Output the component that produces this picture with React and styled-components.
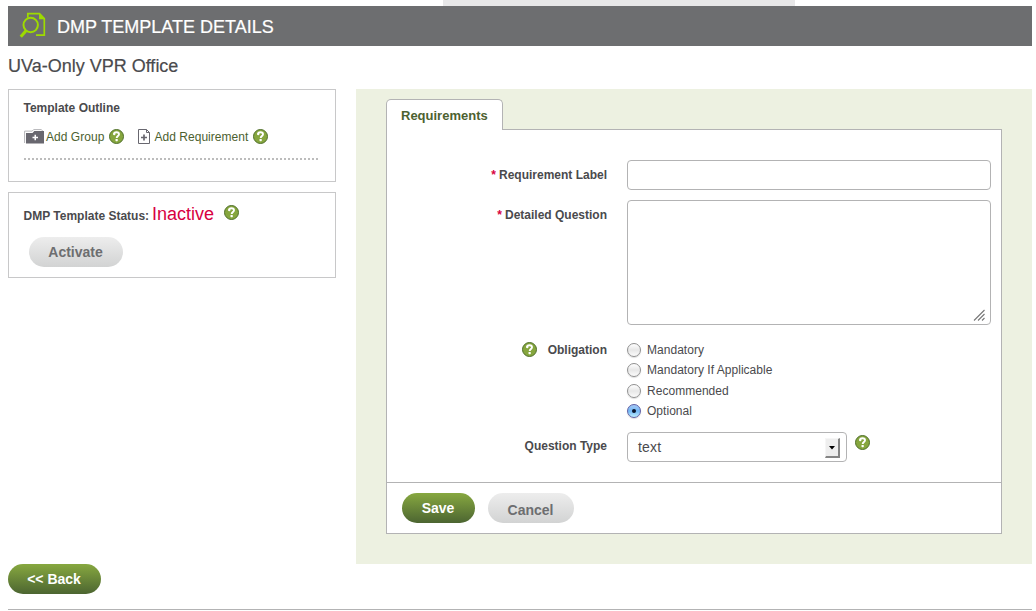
import React from "react";
import styled, { createGlobalStyle } from "styled-components";

const Global = createGlobalStyle`
  * { box-sizing: border-box; }
  body { margin: 0; background: #fff; color: #4a4a4d; font: 12px/16px "Liberation Sans", Arial, sans-serif; overflow: hidden; }
  svg { display: block; flex: none; }
`;
const Page = styled.div`width: 1036px; height: 611px; padding: 0 4px 0 8px; overflow: hidden;`;
const TopStrip = styled.div`width: 352px; height: 6px; margin-left: 435px; background: #e7e7e8;`;
const Header = styled.header`
  display: flex; align-items: center; height: 40px; padding-left: 11px; gap: 9px;
  background: #6d6e70; color: #fff;
`;
const Title = styled.h1`margin: 0; font-size: 18px; line-height: 20px; font-weight: 400; padding-top: 1px; white-space: nowrap; -webkit-text-stroke: 0.2px;`;
const Subtitle = styled(Title)`height: 43px; padding-top: 10px; color: #4a4a4d;`;
const Columns = styled.div`display: flex; gap: 20px; height: 475px;`;
const Sidebar = styled.aside`width: 328px; display: flex; flex-direction: column; gap: 10px;`;
const Card = styled.section`height: ${p => p.$h}px; border: 1px solid #c8c8c9; padding: 10px 14px 0;`;
const Strong = styled.strong`display: block; white-space: nowrap; padding-left: 0.5px;`;
const Actions = styled.div`display: flex; align-items: center; height: 42px; padding-bottom: 1px; margin-left: 1px;`;
const ActionLink = styled.a`
  position: relative; top: 0.5px; color: #4c6130; margin: 0 5px 0 ${p => p.$left}px;
  white-space: nowrap; letter-spacing: 0.04px;
`;
const Gap = styled.span`width: 14px;`;
const Dots = styled.div`
  height: 2px; width: 295px; margin: 0 0 0 1px;
  background: repeating-linear-gradient(90deg, #bcbcbc 0 2px, transparent 2px 4px);
`;
const StatusRow = styled.div`display: flex; align-items: baseline; height: 24px;`;
const Inactive = styled.span`font-size: 18px; line-height: 22px; color: #d8003f; margin: 0 10px 0 3px;`;
const StatusHelp = styled.span`align-self: flex-start; padding-top: 2px;`;
const Button = styled.button`
  display: block; width: ${p => p.$w}px; height: 30px; padding: ${p => p.$drop || 0}px 1px 0 0; border: 0; border-radius: 15px;
  font: bold 14px/20px "Liberation Sans", Arial, sans-serif;
  color: ${p => (p.$green ? "#fff" : "#6d6e70")};
  background: ${p => (p.$green ? "linear-gradient(#87a840, #4c6531)" : "linear-gradient(#ededed, #d2d3d3)")};
`;
const ActivateWrap = styled.div`padding: 10px 0 0 6px;`;
const Main = styled.main`flex: 1; background: #edf1e1; padding: 10px 30px 30px;`;
const Tab = styled.div`
  position: relative; z-index: 1; width: 117px; height: 31px; margin-bottom: -1px; padding: 8px 0 0 14px;
  border: 1px solid #b3b3b4; border-bottom: 0; border-radius: 5px 5px 0 0; background: #fff;
  font-size: 13px; font-weight: bold; color: #4c6130;
`;
const Panel = styled.div`width: 616px; height: 405px; border: 1px solid #b3b3b4; background: #fff;`;
const Fields = styled.div`height: 353px; padding-top: 30px; border-bottom: 1px solid #b3b3b4;`;
const Row = styled.div`display: flex; height: ${p => p.$h}px;`;
const Label = styled.label`
  display: flex; justify-content: flex-end; width: 220px; margin-right: 20px; padding-top: ${p => p.$top}px;
  font-weight: bold; white-space: nowrap;
`;
const Req = styled.span`color: #d8003f; margin-right: 3px;`;
const Box = styled.div`
  display: flex; width: ${p => p.$w}px; height: ${p => p.$h}px; border: 1px solid #b3b3b4; border-radius: 4px; background: #fff;
`;
const Grip = styled.span`margin: auto 5px 3px auto;`;
const Options = styled.div`display: flex; flex-direction: column; margin-top: -1px;`;
const Option = styled.label`display: flex; align-items: center; gap: 6px; height: ${p => p.$h}px; letter-spacing: 0.03px;`;
const Radio = styled.span`
  display: flex; align-items: center; justify-content: center; width: 14px; height: 14px; border-radius: 50%;
  border: 1px solid ${p => (p.$on ? "#5d60a5" : "#909090")};
  background: ${p => (p.$on ? "linear-gradient(#a6c9f5, #72b7f5 50%, #bdf0ff)" : "linear-gradient(#fff, #e7e7e7 50%, #fbfbfb)")};
  box-shadow: 0 1px 1px #0002;
  &::after { content: ""; width: 4px; height: 4px; border-radius: 50%; background: ${p => (p.$on ? "#08152b" : "transparent")}; }
`;
const SelectText = styled.span`font-size: 14px; line-height: 28px; padding-left: 10px; flex: 1; letter-spacing: 0.2px;`;
const Arrow = styled.span`
  display: flex; align-items: center; justify-content: center; width: 15px; height: 20px; margin: 5px 6px 0 0;
  background: #eee; border: solid; border-width: 1px 2px 2px 1px; border-color: #f6f6f6 #858585 #858585 #f6f6f6;
`;
const SelectHelp = styled.span`padding: 3px 0 0 8px;`;
const LabelHelp = styled.span`margin: 0 11px 0 0;`;
const Footer = styled.div`display: flex; gap: 13px; padding: 10px 0 0 15px;`;
const Rule = styled.div`height: 1px; margin-top: 15px; background: #b3b3b4;`;

const Help = () => (
  <svg width="15" height="15" viewBox="0 0 15 15">
    <circle cx="7.5" cy="7.5" r="7" fill="#86a63e" stroke="#51702c" />
    <path d="M5 5.500C5 4 6 3.200 7.500 3.200c1.600 0 2.500.8 2.500 2 0 1.700-2.300 1.800-2.300 3.800" fill="none" stroke="#fff" strokeWidth="1.900" />
    <circle cx="5.300" cy="5.200" r="1.100" fill="#fff" />
    <rect x="6.500" y="10" width="2.300" height="2.200" rx=".6" fill="#fff" />
  </svg>
);
const SearchDoc = () => (
  <svg width="29" height="28" viewBox="0 0 29 28" fill="none" stroke="#9edb00">
    <path d="M8.800 5.500V1.700H20.500l4.800 4.800v16.600H17" strokeWidth="1.700" />
    <path d="M20 1.500v5.800h5.800z" fill="#9edb00" stroke="none" />
    <circle cx="11.700" cy="13" r="7.200" strokeWidth="2" />
    <path d="M7 18.700L1.800 24.800" strokeWidth="3" />
  </svg>
);
const Folder = () => (
  <svg width="20" height="15" viewBox="0 0 20 15">
    <path d="M.6 14V2.100h7.600L9.600.6h7.800l1.300 1.500" fill="none" stroke="#b4b4b8" />
    <path d="M2 14.500V4h6.500L10.300 2H20v12.500z" fill="#68676f" />
    <path d="M8.500 8.500h5.500M11.250 5.800v5.400" stroke="#fff" strokeWidth="1.500" />
  </svg>
);
const DocPlus = () => (
  <svg width="12" height="15" viewBox="0 0 12 15" fill="none" stroke="#68676f">
    <path d="M.5.500h8l3 3v11H.5z" />
    <path d="M8.500.5v3h3" />
    <path d="M3 8.500h6M6 5.500v6" strokeWidth="1.700" />
  </svg>
);

export default function App() {
  return (
    <Page>
      <Global />
      <TopStrip />
      <Header><SearchDoc /><Title>DMP TEMPLATE DETAILS</Title></Header>
      <Subtitle as="h2">UVa-Only VPR Office</Subtitle>
      <Columns>
        <Sidebar>
          <Card $h={93}>
            <Strong>Template Outline</Strong>
            <Actions>
              <Folder /><ActionLink $left={2}>Add Group</ActionLink><Help />
              <Gap />
              <DocPlus /><ActionLink $left={4}>Add Requirement</ActionLink><Help />
            </Actions>
            <Dots />
          </Card>
          <Card $h={86}>
            <StatusRow>
              <Strong>DMP Template Status:</Strong><Inactive>Inactive</Inactive>
              <StatusHelp><Help /></StatusHelp>
            </StatusRow>
            <ActivateWrap><Button $w={94}>Activate</Button></ActivateWrap>
          </Card>
        </Sidebar>
        <Main>
          <Tab>Requirements</Tab>
          <Panel>
            <Fields>
              <Row $h={40}><Label $top={7}><Req>*</Req>Requirement Label</Label><Box $w={364} $h={30} /></Row>
              <Row $h={142}>
                <Label $top={7}><Req>*</Req>Detailed Question</Label>
                <Box $w={364} $h={125}>
                  <Grip>
                    <svg width="12" height="12" viewBox="0 0 12 12" stroke="#777" strokeWidth="1.100"><path d="M1 11.500L11.500 1M5 11.500L11.500 5M9 11.500L11.500 9" /></svg>
                  </Grip>
                </Box>
              </Row>
              <Row $h={90}>
                <Label $top={0}><LabelHelp><Help /></LabelHelp>Obligation</Label>
                <Options>
                  <Option $h={17}><Radio />Mandatory</Option>
                  <Option $h={23}><Radio />Mandatory If Applicable</Option>
                  <Option $h={19}><Radio />Recommended</Option>
                  <Option $h={21}><Radio $on />Optional</Option>
                </Options>
              </Row>
              <Row $h={30}>
                <Label $top={6}>Question Type</Label>
                <Box $w={220} $h={30}>
                  <SelectText>text</SelectText>
                  <Arrow><svg width="6" height="4" viewBox="0 0 6 4"><path d="M0 0h6L3 3.500z" /></svg></Arrow>
                </Box>
                <SelectHelp><Help /></SelectHelp>
              </Row>
            </Fields>
            <Footer>
              <Button $w={73} $green>Save</Button>
              <Button $w={86} $drop={4}>Cancel</Button>
            </Footer>
          </Panel>
        </Main>
      </Columns>
      <Button $w={93} $green>&lt;&lt; Back</Button>
      <Rule />
    </Page>
  );
}
